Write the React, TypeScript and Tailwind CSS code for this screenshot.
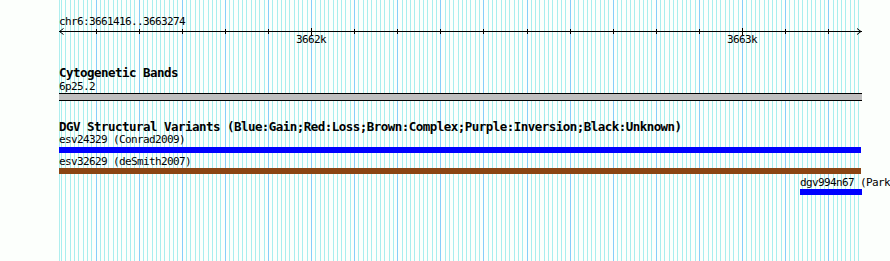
import React from "react";

// region shown: chr6:3661416..3663274, 0.431 px per bp
const bpX = (bp: number) => Math.round(311 + (bp - 3662000) * 0.431);

const gridLines: { x: number; major: boolean }[] = [];
for (let bp = 3661420; bp <= 3663270; bp += 10) {
  gridLines.push({ x: bpX(bp), major: bp % 100 === 0 });
}
const ticks = gridLines.filter((l) => l.major);

function Grid() {
  return (
    <svg className="absolute inset-0" width={890} height={261}>
      <line x1={59.5} y1={0} x2={59.5} y2={261} stroke="#afeeee" />
      {gridLines
        .filter((l) => !l.major)
        .map((l) => (
          <line key={l.x} x1={l.x + 0.5} y1={0} x2={l.x + 0.5} y2={261} stroke="#a8eeee" />
        ))}
      {ticks.map((l) => (
        <line key={l.x} x1={l.x + 0.5} y1={0} x2={l.x + 0.5} y2={261} stroke="#87cefa" />
      ))}
    </svg>
  );
}

function Ruler() {
  // svg sits at y=28, x=59
  return (
    <>
      <svg className="block overflow-visible" width={803} height={5}>
        <line x1={0} y1={3.5} x2={803} y2={3.5} stroke="#000" />
        <path d="M0.5 3.5 L4.5 0.5 M0.5 3.5 L4.5 6.5" stroke="#000" fill="none" />
        <path d="M802 3.5 L798 0.5 M802 3.5 L798 6.5" stroke="#000" fill="none" />
        {ticks.map((t) => {
          const big = t.x === bpX(3662000) || t.x === bpX(3663000);
          return (
            <line
              key={t.x}
              x1={t.x - 59 + 0.5}
              y1={big ? 0 : 1}
              x2={t.x - 59 + 0.5}
              y2={big ? 7 : 6}
              stroke="#000"
            />
          );
        })}
      </svg>
      <div className="relative h-[13px] text-[11px] leading-[13px] tracking-[-0.62px]">
        <span className="absolute top-0 left-[237px]">3662k</span>
        <span className="absolute top-0 left-[668px]">3663k</span>
      </div>
    </>
  );
}

const small = "text-[11px] tracking-[-0.62px] whitespace-nowrap";
const bold = "text-[12.5px] font-bold tracking-[-0.53px] whitespace-nowrap";

export default function App() {
  return (
    <div className="relative w-[890px] h-[261px] overflow-hidden bg-[#fcfffc] text-black font-['DejaVu_Sans_Mono',monospace]">
      <Grid />
      <div className="relative pl-[59px] pt-[15px]">
        <div className={`h-[13px] leading-[13px] ${small}`}>chr6:3661416..3663274</div>
        <Ruler />

        <div className={`mt-[20px] h-[13px] leading-[13px] ${bold}`}>Cytogenetic Bands</div>
        <div className={`mt-[2px] h-[12px] leading-[12px] ${small}`}>6p25.2</div>
        <div className="h-[8px] w-[803px] border-y border-black bg-[#bfbfbf]" />

        <div className={`mt-[20px] h-[12px] leading-[12px] ${bold}`}>
          DGV Structural Variants (Blue:Gain;Red:Loss;Brown:Complex;Purple:Inversion;Black:Unknown)
        </div>
        <div className={`h-[14px] leading-[13px] ${small}`}>esv24329 (Conrad2009)</div>
        <div className="h-[6px] w-[802px] bg-[#0000ff]" />

        <div className={`mt-[2px] h-[13px] leading-[13px] ${small}`}>esv32629 (deSmith2007)</div>
        <div className="h-[6px] w-[802px] bg-[#8b4513]" />

        <div className="mt-[2px] ml-[741px]">
          <div className={`h-[13px] leading-[13px] ${small}`}>dgv994n67 (Park</div>
          <div className="h-[6px] w-[62px] bg-[#0000ff]" />
        </div>
      </div>
    </div>
  );
}
